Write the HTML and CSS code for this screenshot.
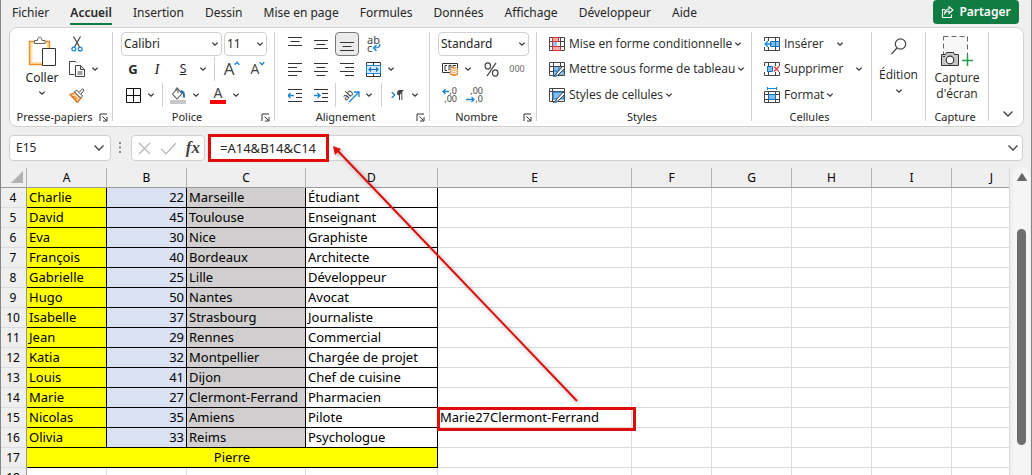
FILE: index.html
```html
<!DOCTYPE html>
<html lang="fr">
<head>
<meta charset="utf-8">
<meta name="viewport" content="width=device-width, initial-scale=1">
<title>Classeur</title>
<link rel="stylesheet" href="styles.css">
</head>
<body>
<svg class="defs" aria-hidden="true">
  <symbol id="chev" viewBox="0 0 8 8"><path d="M1.3 2.6 4 5.2 6.7 2.6" fill="none" stroke="#333" stroke-width="1.3"/></symbol>
  <symbol id="chev-lg" viewBox="0 0 12 8"><path d="M1.5 1.5 6 6l4.500-4.500" fill="none" stroke="#444" stroke-width="1.400"/></symbol>
  <symbol id="launch" viewBox="0 0 9 9"><path d="M1 8V1h7M3.500 3.500l4 4M8 4v4H4" fill="none" stroke="#333"/></symbol>
  <symbol id="grid" viewBox="0 0 16 14"><path d="M.5.5h15v13H.5zM.5 4.500h15M.5 9.500h15M4.500.5v13M11.500.5v13" fill="#fff" stroke="#444"/></symbol>
</svg>
<div class="app">
  <nav class="tabs">
    <a class="tab" href="#">Fichier</a>
    <a class="tab active" href="#">Accueil</a>
    <a class="tab" href="#">Insertion</a>
    <a class="tab" href="#">Dessin</a>
    <a class="tab" href="#">Mise en page</a>
    <a class="tab" href="#">Formules</a>
    <a class="tab" href="#">Données</a>
    <a class="tab" href="#">Affichage</a>
    <a class="tab" href="#">Développeur</a>
    <a class="tab" href="#">Aide</a>
    <button class="share"><svg width="13" height="13" viewBox="0 0 13 13" fill="none" stroke="#fff" stroke-width="1.100"><path d="M4 3.500H1.500v8h9V8.500"/><path d="M3.500 8.500C4 6 5.500 5 8 5v2.500l4-3.500-4-3.300V3C5 3 3.500 5 3.500 8.500z"/></svg>Partager</button>
  </nav>

  <section class="ribbon" aria-label="Accueil">
    <div class="group clipboard">
      <button class="big">
        <svg width="28" height="31" viewBox="0 0 28 31"><path d="M1.500 5.500h20v23h-20z" fill="#fbe3ae" stroke="#e8912d" stroke-width="1.500"/><path d="M4.500 8h14v18h-14z" fill="#fff"/><path d="M6.500 7.500V4.500h3C9.500 0 14 0 14 4.500h3v3z" fill="#fff" stroke="#666"/><path d="M14.500 12.500h13v17h-13z" fill="#fff" stroke="#333"/></svg>
        <span>Coller</span>
        <svg width="8" height="8"><use href="#chev"/></svg>
      </button>
      <div class="rows">
        <div class="row"><button class="ic" aria-label="Couper"><svg width="12" height="16" viewBox="0 0 12 16" fill="none"><path d="M2.500.5 8.500 11M9.500.5 3.500 11" stroke="#444" stroke-width="1.200"/><circle cx="2.800" cy="13" r="1.900" stroke="#1b87d6" stroke-width="1.300"/><circle cx="9.200" cy="13" r="1.900" stroke="#1b87d6" stroke-width="1.300"/></svg></button></div>
        <div class="row"><button class="ic" aria-label="Copier"><svg width="17" height="17" viewBox="0 0 17 17"><path d="M5.500 13.500h-5V.5h6l1 1" fill="#fff" stroke="#444"/><path d="M6.500 4.500h5l4 4v7h-9z" fill="#fff" stroke="#444"/><path d="M11.500 4.500v4h4M8.500 11h5M8.500 13h5" fill="none" stroke="#444"/></svg></button><button class="cv" aria-label="Options de copie"><svg width="8" height="8"><use href="#chev"/></svg></button></div>
        <div class="row"><button class="ic" aria-label="Reproduire la mise en forme"><svg width="16" height="15" viewBox="0 0 16 15"><path d="M1 6.500 6 4.500l6 5.500-3.500 4.500z" fill="#fbd7a5" stroke="#e07b1f" stroke-width="1.300"/><path d="M3 8.500 8 13M2 8l5 1M5 11l3-1" stroke="#e07b1f"/><path d="m5.500 4 2-2 6 6-2 2z" fill="#fff" stroke="#444"/><path d="M10 4.500 13.500.7l1.500 1.500L12 6" fill="#fff" stroke="#444"/></svg></button></div>
      </div>
      <div class="label"><span>Presse-papiers</span><svg width="9" height="9"><use href="#launch"/></svg></div>
    </div>

    <div class="group font">
      <div class="row"><label class="combo wide"><select aria-label="Police"><option>Calibri</option></select><svg width="8" height="8"><use href="#chev"/></svg></label><label class="combo size"><select aria-label="Taille"><option>11</option></select><svg width="8" height="8"><use href="#chev"/></svg></label></div>
      <div class="row"><button class="ic bold">G</button><button class="ic italic">I</button><button class="ic underline">S</button><button class="cv" aria-label="Options de soulignement"><svg width="8" height="8"><use href="#chev"/></svg></button><i class="sep"></i><button class="ic grow" aria-label="Augmenter la taille"><span>A</span><svg width="6" height="5" viewBox="0 0 6 5"><path d="M.7 3.800 3 1.200l2.300 2.600" fill="none" stroke="#1b87d6" stroke-width="1.300"/></svg></button><button class="ic shrink" aria-label="Réduire la taille"><span>A</span><svg width="6" height="5" viewBox="0 0 6 5"><path d="M.7 1.200 3 3.800l2.300-2.600" fill="none" stroke="#1b87d6" stroke-width="1.300"/></svg></button></div>
      <div class="row"><button class="ic" aria-label="Bordures"><svg width="15" height="15" viewBox="0 0 15 15"><path d="M.5.5h14v14H.5zM7.500.5v14M.5 7.500h14" fill="none" stroke="#111"/></svg></button><button class="cv" aria-label="Options de bordure"><svg width="8" height="8"><use href="#chev"/></svg></button><i class="sep"></i><button class="ic" aria-label="Remplissage"><svg width="16" height="17" viewBox="0 0 16 17"><path d="M0 13h16v4H0z" fill="#c8c8c8"/><path d="m2.500 7 5-5.500 4.500 5-5 5.500z" fill="#fff" stroke="#555" stroke-width="1.100"/><path d="M6 4V1.500q1-1.500 2 0V6" fill="none" stroke="#555"/><path d="M10.500 4.500q4-1 3.500 6" fill="none" stroke="#2171b5" stroke-width="2"/></svg></button><button class="cv" aria-label="Options de remplissage"><svg width="8" height="8"><use href="#chev"/></svg></button><button class="ic colour" aria-label="Couleur de police">A</button><button class="cv" aria-label="Options de couleur"><svg width="8" height="8"><use href="#chev"/></svg></button></div>
      <div class="label"><span>Police</span><svg width="9" height="9"><use href="#launch"/></svg></div>
    </div>

    <div class="group align">
      <div class="row gapped">
        <button class="ic" aria-label="Aligner en haut"><svg width="14" height="15" viewBox="0 0 14 15"><path d="M0 .5h14M2.500 4.500h9M0 8.500h14" stroke="#333"/></svg></button>
        <button class="ic" aria-label="Aligner au centre"><svg width="14" height="15" viewBox="0 0 14 15"><path d="M0 3.500h14M2.500 7.500h9M0 11.500h14" stroke="#333"/></svg></button>
        <button class="ic pressed" aria-label="Aligner en bas"><svg width="14" height="15" viewBox="0 0 14 15"><path d="M0 5.500h14M2.500 9.500h9M0 13.500h14" stroke="#333"/></svg></button>
        <button class="ic wrap" aria-label="Renvoyer à la ligne"><span>ab</span><span>c<svg width="9" height="8" viewBox="0 0 9 8"><path d="M7.500 0q1.500 4-6 4M4.500 1l-3 3 3 3" fill="none" stroke="#1b87d6" stroke-width="1.500"/></svg></span></button>
      </div>
      <div class="row gapped">
        <button class="ic" aria-label="Aligner à gauche"><svg width="14" height="13" viewBox="0 0 14 13"><path d="M0 .5h14M0 4.500h9M0 8.500h14M0 12.500h9" stroke="#333"/></svg></button>
        <button class="ic" aria-label="Centrer"><svg width="14" height="13" viewBox="0 0 14 13"><path d="M0 .5h14M2.500 4.500h9M0 8.500h14M2.500 12.500h9" stroke="#333"/></svg></button>
        <button class="ic" aria-label="Aligner à droite"><svg width="14" height="13" viewBox="0 0 14 13"><path d="M0 .5h14M5 4.500h9M0 8.500h14M5 12.500h9" stroke="#333"/></svg></button>
        <span class="pair"><button class="ic" aria-label="Fusionner"><svg width="15" height="15" viewBox="0 0 15 15"><path d="M.5.5h14v14H.5zM7.500.5v14" fill="#fff" stroke="#333"/><path d="M.5 3.500h14v8H.5z" fill="#d4eafa" stroke="#1b87d6"/><path d="M3 7.500h9M5 5.500l-2 2 2 2M10 5.500l2 2-2 2" fill="none" stroke="#1671bd" stroke-width="1.200"/></svg></button><button class="cv" aria-label="Options de fusion"><svg width="8" height="8"><use href="#chev"/></svg></button></span>
      </div>
      <div class="row">
        <button class="ic" aria-label="Diminuer le retrait"><svg width="14" height="13" viewBox="0 0 14 13"><path d="M0 .5h14M8 4.500h6M8 8.500h6M0 12.500h14" stroke="#333"/><path d="M0 6.500h6M2.500 4 0 6.500 2.500 9" fill="none" stroke="#1b87d6" stroke-width="1.300"/></svg></button>
        <button class="ic indent" aria-label="Augmenter le retrait"><svg width="14" height="13" viewBox="0 0 14 13"><path d="M0 .5h14M8 4.500h6M8 8.500h6M0 12.500h14" stroke="#333"/><path d="M0 6.500h6M3.500 4 6 6.500 3.500 9" fill="none" stroke="#1b87d6" stroke-width="1.300"/></svg></button>
        <i class="sep"></i>
        <button class="ic" aria-label="Orientation"><svg class="orient" width="17" height="16" viewBox="0 0 17 16"><text x="-1" y="11" transform="rotate(-45 5 8)" font-size="10" fill="#333">ab</text><path d="m6 15 9.500-9.500M11 5h5v5" fill="none" stroke="#1b87d6" stroke-width="1.300"/></svg></button><button class="cv" aria-label="Options d'orientation"><svg width="8" height="8"><use href="#chev"/></svg></button>
        <i class="sep far"></i>
        <button class="ic" aria-label="Sens du texte"><svg width="13" height="10" viewBox="0 0 13 10"><path d="m.7 2 3 3-3 3" fill="none" stroke="#1b87d6" stroke-width="1.300"/><path d="M8.500 5.500Q6 5.500 6 3T8.500.5H12" fill="#444"/><path d="M8.500 10V.5M10.800 10V.5M7.500.5h5" stroke="#444" fill="none"/></svg></button><button class="cv" aria-label="Options de sens"><svg width="8" height="8"><use href="#chev"/></svg></button>
      </div>
      <div class="label"><span>Alignement</span><svg width="9" height="9"><use href="#launch"/></svg></div>
    </div>

    <div class="group number">
      <div class="row"><label class="combo std"><select aria-label="Format de nombre"><option>Standard</option></select><svg width="8" height="8"><use href="#chev"/></svg></label></div>
      <div class="row gapped">
        <span class="pair"><button class="ic" aria-label="Format comptable"><svg width="17" height="14" viewBox="0 0 17 14"><path d="M.5 1.500h15v9H.5z" fill="#fff" stroke="#333"/><path d="M5 3.500H3v5h2M7 8.500v-5h2v5M11 5V3.500h3" fill="none" stroke="#333"/><path d="M8.500 6.500q3.500-2 7 0v6q-3.500 2-7 0z" fill="#f3a661" stroke="#e07b1f"/><path d="M8.500 6.500q3.500 2 7 0M8.500 8.500q3.500 2 7 0M8.500 10.500q3.500 2 7 0" fill="none" stroke="#fff"/></svg></button><button class="cv" aria-label="Options comptables"><svg width="8" height="8"><use href="#chev"/></svg></button></span>
        <button class="ic" aria-label="Pourcentage"><svg width="15" height="15" viewBox="0 0 15 15" fill="none" stroke="#444" stroke-width="1.200"><ellipse cx="3.800" cy="4" rx="2.800" ry="3.200"/><ellipse cx="11.200" cy="11" rx="2.800" ry="3.200"/><path d="M12 .8 3 14.200"/></svg></button><button class="ic thousand">000</button>
      </div>
      <div class="row gapped">
        <button class="ic dec" aria-label="Ajouter une décimale"><span><svg width="7" height="7" viewBox="0 0 7 7"><path d="M1 3.500h6M3.500 1 1 3.500 3.500 6" fill="none" stroke="#1b87d6" stroke-width="1.300"/></svg>,0</span><span>,00</span></button>
        <button class="ic dec" aria-label="Réduire les décimales"><span>,00</span><span><svg width="9" height="7" viewBox="0 0 9 7"><path d="M0 3.500h8M5.500 1 8 3.500 5.500 6" fill="none" stroke="#1b87d6" stroke-width="1.300"/></svg>,0</span></button>
      </div>
      <div class="label"><span>Nombre</span><svg width="9" height="9"><use href="#launch"/></svg></div>
    </div>

    <div class="group styles">
      <div class="row"><button class="cmd"><svg width="16" height="14" viewBox="0 0 16 14"><use href="#grid" width="16" height="14"/><path d="M3.500.5h6v4h-6zM3.500 9.500h8v4h-8z" fill="#f9a8ab" stroke="#d9333a"/><path d="M4 5h4v4H4z" fill="#8dc3ef"/><path d="M3.500.5v13" stroke="#d9333a"/></svg>Mise en forme conditionnelle<svg width="8" height="8"><use href="#chev"/></svg></button></div>
      <div class="row"><button class="cmd"><svg width="16" height="15" viewBox="0 0 16 15"><use href="#grid" width="16" height="14"/><path d="M5 5h10v8H5z" fill="#84bdec"/><path d="M5 9h10M10 5v8" stroke="#1671bd"/><path d="m7 12 7-8 2 2-7 7q-2 2-5 1 2 0 3-2z" fill="#fff" stroke="#444"/><path d="M4.500 14.500q2 0 2.500-2.500l2 1.500q-1.500 1.500-4.500 1z" fill="#1b87d6"/></svg>Mettre sous forme de tableau<svg width="8" height="8"><use href="#chev"/></svg></button></div>
      <div class="row"><button class="cmd"><svg width="16" height="15" viewBox="0 0 16 15"><path d="M.5.5h15v13H.5zM3.500.5v13M.5 3.500h15" fill="#fff" stroke="#444"/><path d="M4 4h11v7H4z" fill="#84bdec" stroke="#1671bd"/><path d="m7 12 7-8 2 2-7 7q-2 2-5 1 2 0 3-2z" fill="#fff" stroke="#444"/><path d="M4.500 14.500q2 0 2.500-2.500l2 1.500q-1.500 1.500-4.500 1z" fill="#1b87d6"/></svg>Styles de cellules<svg width="8" height="8"><use href="#chev"/></svg></button></div>
      <div class="label"><span>Styles</span></div>
    </div>

    <div class="group cells">
      <div class="row"><button class="cmd spaced"><svg width="16" height="14" viewBox="0 0 16 14"><use href="#grid" width="16" height="14"/><path d="M0 4h7v6H0z" fill="#fff"/><path d="M6.500 4.500h9v5h-9z" fill="#84bdec" stroke="#1671bd"/><path d="M11.500 4.500v5" stroke="#1671bd"/><path d="M1 7h7M4 4 1 7l3 3" fill="none" stroke="#1b87d6" stroke-width="1.300"/></svg>Insérer<svg width="8" height="8"><use href="#chev"/></svg></button></div>
      <div class="row"><button class="cmd spaced"><svg width="16" height="14" viewBox="0 0 16 14"><use href="#grid" width="16" height="14"/><path d="M8 4h8v6H8zM0 4h3v6H0z" fill="#fff"/><path d="M3.500 4.500h5v5h-5z" fill="#84bdec" stroke="#1671bd"/><path d="m10 4.500 5 5M15 4.500l-5 5" stroke="#e43d42" stroke-width="1.300"/></svg>Supprimer<svg width="8" height="8"><use href="#chev"/></svg></button></div>
      <div class="row"><button class="cmd"><svg width="16" height="16" viewBox="0 0 16 16"><path d="M.5 4.500h15v11H.5zM4.500 4v12M11.500 4v12M.5 7.500h15M.5 12.500h15" fill="#fff" stroke="#444"/><path d="M4.500 7.500h7v5h-7z" fill="#84bdec" stroke="#1671bd"/><path d="M3 1.500h10M3.500 0v3M12.500 0v3" stroke="#1b87d6"/></svg>Format<svg width="8" height="8"><use href="#chev"/></svg></button></div>
      <div class="label"><span>Cellules</span></div>
    </div>

    <div class="group edit">
      <button class="big">
        <svg width="16" height="17" viewBox="0 0 16 17" fill="none" stroke="#444" stroke-width="1.200"><circle cx="9.500" cy="6" r="5.200"/><path d="M6 10 .5 16"/></svg>
        <span>Édition</span>
        <svg width="8" height="8"><use href="#chev"/></svg>
      </button>
    </div>

    <div class="group capture">
      <button class="big">
        <svg width="32" height="31" viewBox="0 0 32 31"><path d="M2.500.5h24v22h-24z" fill="#f8f8f8" stroke="#666" stroke-dasharray="5 3"/><path d="M.5 18.500h4l1-2h7l1 2h4v11H.5z" fill="#c8c6c4" stroke="#333"/><circle cx="9" cy="24" r="3.800" fill="#fff" stroke="#333" stroke-width="1.200"/><path d="M2 20.500h2" stroke="#333"/><path d="M19 19h13v12H19z" fill="#fff"/><path d="M26.500 19v11M21 24.500h11" stroke="#21a045" stroke-width="1.500"/></svg>
        <span>Capture<br>d'écran</span>
      </button>
      <div class="label"><span>Capture</span></div>
    </div>
    <button class="collapse" aria-label="Réduire le ruban"><svg width="12" height="8"><use href="#chev-lg"/></svg></button>
  </section>

  <section class="formula-bar">
    <label class="name-box"><input aria-label="Zone Nom" value="E15"><svg width="12" height="8"><use href="#chev-lg"/></svg></label>
    <svg class="dots" width="3" height="12" viewBox="0 0 3 12"><path d="M0 0h2v2H0zM0 4.500h2v2H0zM0 9h2v2H0z" fill="#888"/></svg>
    <div class="fx-box">
      <button aria-label="Annuler"><svg width="13" height="13" viewBox="0 0 13 13"><path d="m1 1 11 11M12 1 1 12" stroke="#b5b5b5" stroke-width="1.200"/></svg></button>
      <button aria-label="Entrer"><svg width="17" height="13" viewBox="0 0 17 13"><path d="m1 7 5 5L16 1" fill="none" stroke="#b5b5b5" stroke-width="1.200"/></svg></button>
      <button class="fx" aria-label="Insérer une fonction">fx</button>
    </div>
    <div class="formula"><input aria-label="Formule" value="=A14&amp;B14&amp;C14"><button aria-label="Développer"><svg width="12" height="8"><use href="#chev-lg"/></svg></button></div>
  </section>

  <main class="sheet">
    <div class="cells-view">
      <table>
        <colgroup><col class="c-n"><col class="c-s"><col class="c-s"><col class="c-c"><col class="c-d"><col class="c-e"><col class="c-s"><col class="c-s"><col class="c-s"><col class="c-s"><col class="c-s"></colgroup>
        <thead><tr><th class="corner"><svg width="12" height="12" viewBox="0 0 12 12"><path d="M12 0v12H0z" fill="#b2b2b2"/></svg></th><th>A</th><th>B</th><th>C</th><th>D</th><th>E</th><th>F</th><th>G</th><th>H</th><th>I</th><th>J</th></tr></thead>
        <tbody>
          <tr><th>4</th><td class="a">Charlie</td><td class="b">22</td><td class="c">Marseille</td><td class="d">Étudiant</td><td></td><td></td><td></td><td></td><td></td><td></td></tr>
          <tr><th>5</th><td class="a">David</td><td class="b">45</td><td class="c">Toulouse</td><td class="d">Enseignant</td><td></td><td></td><td></td><td></td><td></td><td></td></tr>
          <tr><th>6</th><td class="a">Eva</td><td class="b">30</td><td class="c">Nice</td><td class="d">Graphiste</td><td></td><td></td><td></td><td></td><td></td><td></td></tr>
          <tr><th>7</th><td class="a">François</td><td class="b">40</td><td class="c">Bordeaux</td><td class="d">Architecte</td><td></td><td></td><td></td><td></td><td></td><td></td></tr>
          <tr><th>8</th><td class="a">Gabrielle</td><td class="b">25</td><td class="c">Lille</td><td class="d">Développeur</td><td></td><td></td><td></td><td></td><td></td><td></td></tr>
          <tr><th>9</th><td class="a">Hugo</td><td class="b">50</td><td class="c">Nantes</td><td class="d">Avocat</td><td></td><td></td><td></td><td></td><td></td><td></td></tr>
          <tr><th>10</th><td class="a">Isabelle</td><td class="b">37</td><td class="c">Strasbourg</td><td class="d">Journaliste</td><td></td><td></td><td></td><td></td><td></td><td></td></tr>
          <tr><th>11</th><td class="a">Jean</td><td class="b">29</td><td class="c">Rennes</td><td class="d">Commercial</td><td></td><td></td><td></td><td></td><td></td><td></td></tr>
          <tr><th>12</th><td class="a">Katia</td><td class="b">32</td><td class="c">Montpellier</td><td class="d">Chargée de projet</td><td></td><td></td><td></td><td></td><td></td><td></td></tr>
          <tr><th>13</th><td class="a">Louis</td><td class="b">41</td><td class="c">Dijon</td><td class="d">Chef de cuisine</td><td></td><td></td><td></td><td></td><td></td><td></td></tr>
          <tr><th>14</th><td class="a">Marie</td><td class="b">27</td><td class="c">Clermont-Ferrand</td><td class="d">Pharmacien</td><td></td><td></td><td></td><td></td><td></td><td></td></tr>
          <tr><th>15</th><td class="a">Nicolas</td><td class="b">35</td><td class="c">Amiens</td><td class="d">Pilote</td><td class="result">Marie27Clermont-Ferrand</td><td></td><td></td><td></td><td></td><td></td></tr>
          <tr><th>16</th><td class="a">Olivia</td><td class="b">33</td><td class="c">Reims</td><td class="d">Psychologue</td><td></td><td></td><td></td><td></td><td></td><td></td></tr>
          <tr><th>17</th><td class="a merged" colspan="4">Pierre</td><td></td><td></td><td></td><td></td><td></td><td></td></tr>
          <tr><th>18</th><td></td><td></td><td></td><td></td><td></td><td></td><td></td><td></td><td></td><td></td></tr>
        </tbody>
      </table>
    </div>
    <div class="scroll"><svg width="10" height="8" viewBox="0 0 10 8"><path d="M5 .5 9.500 7.500h-9z" fill="#666" stroke="#666" stroke-linejoin="round"/></svg><div class="thumb"></div></div>
  </main>
  <svg class="arrow" width="640" height="440" viewBox="0 0 640 440"><path d="M577 401 337 150" stroke="#e00b0b" stroke-width="2"/><path d="m333 146 8 3-6 6z" fill="#e00b0b"/></svg>
</div>
</body>
</html>
```
FILE: styles.css
```css
* { box-sizing: border-box; }
body { margin: 0; font: 12px/16px "Noto Sans", "Open Sans", sans-serif; color: #262626; }
button { margin: 0; padding: 0; border: 0; background: none; font: inherit; color: inherit; }
svg { display: block; flex: none; }
.defs { position: absolute; width: 0; height: 0; }
.app { position: relative; display: flex; flex-direction: column; height: 100vh; overflow: hidden; background: #efefef; border-left: 1px solid #858585; border-right: 1px solid #858585; }

.tabs { display: flex; gap: 21px; height: 27px; padding-left: 11px; flex: none; }
.tab { height: 25px; padding-top: 5px; color: inherit; text-decoration: none; white-space: nowrap; }
.tab.active { font-weight: 600; border-bottom: 2px solid #107c41; }
.share { display: flex; align-items: center; justify-content: center; gap: 5px; width: 86px; height: 24px; margin: 0 12px 0 auto; border-radius: 4px; background: #107c41; color: #fff; font-weight: 600; }

.ribbon { display: flex; flex: none; margin: 0 7px 0 8px; border: 1px solid #d1d1d1; border-radius: 8px; background: #fff; }
.group { display: grid; grid-template-rows: 24px 26px 26px 13px; flex: none; margin: 4px 0 5px; border-right: 1px solid #d1d1d1; }
.clipboard { width: 103px; grid-template-columns: 64px 1fr; }
.font { width: 162px; padding-left: 8px; }
.align { width: 155px; padding-left: 8px; }
.number { width: 107px; padding-left: 8px; }
.styles { width: 215px; }
.cells { width: 120px; }
.styles .row, .cells .row { padding-left: 12px; }
.edit { width: 54px; }
.capture { width: 63px; }
.row { display: flex; align-items: center; }
.gapped { gap: 2px; }
.pair { display: flex; margin-right: 3px; }
.rows { grid-row: 1 / 4; grid-column: 2; display: grid; grid-template-rows: 24px 26px 26px; margin-left: -9px; }
.ic { display: flex; align-items: center; justify-content: center; width: 24px; height: 24px; flex: none; }
.cv { display: flex; align-items: center; justify-content: center; width: 12px; height: 24px; flex: none; }
.sep { width: 1px; height: 24px; margin: 0 3px 0 5px; background: #d1d1d1; }
.indent { margin-left: 2px; }
.align .sep { margin-left: 2px; }
.align .sep.far { margin-left: 6px; }
.label { grid-column: 1 / -1; grid-row: 4; display: flex; align-items: center; height: 18px; padding-right: 4px; font-size: 11px; }
.font .label, .align .label, .number .label { margin-left: -8px; }
.label span { flex: 1; text-align: center; }
.big { grid-column: 1; grid-row: 1 / 4; display: flex; flex-direction: column; align-items: center; padding-top: 4px; }
.big span { margin: 3px 0; }
.edit .big { padding-top: 6px; }
.edit .big span { margin: 12px 0 4px; }
.edit .big, .capture .big, .cmd { font-family: "Open Sans", "Noto Sans", sans-serif; }

.combo { display: grid; align-items: center; height: 24px; border: 1px solid #d1d1d1; border-radius: 4px; background: #fff; }
.combo select { grid-area: 1 / 1; width: 100%; height: 22px; padding: 0 2px; border: 0; appearance: none; background: transparent; font: inherit; color: inherit; }
.combo svg { grid-area: 1 / 1; justify-self: end; margin-right: 2px; }
.wide { width: 101px; margin-right: 2px; }
.size { width: 43px; }
.std { width: 91px; }

.bold { font-size: 13px; font-weight: 700; }
.italic { font: italic 15px "Liberation Serif", serif; }
.underline { font-size: 12px; text-decoration: underline; width: 28px; }
.grow, .shrink { align-items: flex-start; line-height: 24px; font-family: "Open Sans", sans-serif; color: #444; }
.grow { width: 28px; font-size: 17px; }
.shrink { font-size: 14px; }
.grow svg, .shrink svg { margin-top: 4px; }
.colour { height: 18px; width: 16px; margin: 0 4px 0 8px; border-bottom: 4px solid #f00; font-size: 14px; color: #444; }
.pressed { border: 1px solid #777; border-radius: 4px; background: #ebebeb; }
.wrap { flex-direction: column; align-items: flex-start; padding-left: 6px; line-height: 8px; font-size: 11px; color: #444; }
.wrap span, .dec span { display: flex; align-items: center; }
.orient { overflow: visible; }
.thousand { font-size: 9px; color: #666; }
.dec { flex-direction: column; align-items: flex-end; padding-right: 5px; line-height: 8px; font-size: 9px; color: #444; }
.cmd { display: flex; align-items: center; gap: 4px; white-space: nowrap; }
.cmd svg:last-child { margin-left: -2px; }
.cmd.spaced svg:last-child { margin-left: 8px; }
.collapse { flex: 1; display: flex; justify-content: center; align-items: flex-end; padding: 0 0 8px 4px; }

.formula-bar { display: flex; flex: none; align-items: flex-start; height: 41px; padding: 8px 8px 0; }
.name-box, .fx-box, .formula { display: flex; align-items: center; height: 26px; border: 1px solid #d1d1d1; border-radius: 4px; background: #fff; }
.name-box { width: 102px; padding: 0 5px 0 6px; }
.name-box input { width: 100%; min-width: 0; padding: 0; border: 0; outline: 0; font: inherit; color: inherit; }
.dots { margin: 7px 9px 0 8px; }
.fx-box { width: 74px; justify-content: space-between; padding: 0 4px 0 6px; }
.fx { font: italic 700 17px/20px "Liberation Serif", serif; color: #444; }
.formula { flex: 1; justify-content: space-between; margin-left: 4px; padding-right: 3px; }
.formula input { width: 121px; height: 28px; margin-left: -2px; padding: 0 9px; border: 3px solid #e00b0b; font: inherit; font-size: 13px; color: inherit; outline: 0; background: #fff; }

.sheet { display: flex; flex: 1; min-height: 0; }
.cells-view { flex: 1; min-width: 0; margin-left: -1px; overflow: hidden; border-right: 1px solid #d9d9d9; }
table { width: 1032px; table-layout: fixed; border-collapse: separate; border-spacing: 0; font-size: 13px; color: #000; }
.c-n { width: 27px; }
.c-s { width: 80px; }
.c-c { width: 119px; }
.c-d { width: 132px; }
.c-e { width: 194px; }
th, td { height: 20px; padding: 0 2px; line-height: 19px; border-right: 1px solid #dcdcdc; border-bottom: 1px solid #dcdcdc; white-space: nowrap; }
th { font-weight: 400; font-size: 12px; background: #efefef; }
thead th { border-right-color: #b5b5b5; border-bottom-color: #999; }
tbody th { border-right-color: #999; }
.corner { padding: 0 3px 2px 0; }
.corner svg { margin-left: auto; }
td { background: #fff; }
.a, .b, .c, .d { border-color: #000; }
.a { background: #ff0; }
.b { background: #d9e1f2; text-align: right; }
.c { background: #d0cece; }
.merged { text-align: center; }
.result { position: relative; }
.result::after { content: ""; position: absolute; inset: -1px -5px -4px -1px; border: 3px solid #e00b0b; }
.scroll { display: flex; flex-direction: column; align-items: center; width: 17px; margin: 0 1px 0 3px; padding: 5px 0 30px; border-radius: 8px 8px 0 0; background: #f5f5f5; }
.thumb { flex: 1; width: 9px; margin-top: 48px; border-radius: 5px; background: #6e6e6e; }
.arrow { position: absolute; left: -1px; top: 0; pointer-events: none; filter: drop-shadow(2px 2px 2px rgba(0, 0, 0, .35)); }
```
